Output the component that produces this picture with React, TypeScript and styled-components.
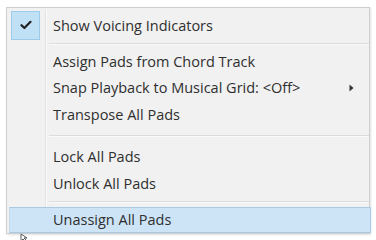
import styled, { createGlobalStyle } from 'styled-components';

const GlobalStyle = createGlobalStyle`
  html, body {
    margin: 0;
    padding: 0;
    background: #ffffff;
  }
  body {
    width: 376px;
    height: 240px;
    overflow: hidden;
  }
`;

type Entry =
  | { kind: 'item'; label: string; checked?: boolean; submenu?: boolean; hot?: boolean }
  | { kind: 'sep'; gap: number };

const entries: Entry[] = [
  { kind: 'item', label: 'Show Voicing Indicators', checked: true },
  { kind: 'sep', gap: 8 },
  { kind: 'item', label: 'Assign Pads from Chord Track' },
  { kind: 'item', label: 'Snap Playback to Musical Grid: <Off>', submenu: true },
  { kind: 'item', label: 'Transpose All Pads' },
  { kind: 'sep', gap: 16 },
  { kind: 'item', label: 'Lock All Pads' },
  { kind: 'item', label: 'Unlock All Pads' },
  { kind: 'sep', gap: 10 },
  { kind: 'item', label: 'Unassign All Pads', hot: true },
];

export default function App() {
  return (
    <>
      <GlobalStyle />
      <Page>
        <Menu>
          <Gutter />
          {entries.map((e, i) =>
            e.kind === 'sep' ? (
              <Separator key={i} $gap={e.gap} />
            ) : (
              <Item key={i} $hot={e.hot} $tall={e.checked}>
                <CheckCell>
                  {e.checked && (
                    <CheckBox>
                      <svg width="12" height="10" viewBox="0 0 12 10">
                        <path
                          d="M1.5 5.2 L4.4 8 L10.5 1.8"
                          fill="none"
                          stroke="#222"
                          strokeWidth="2.2"
                          strokeLinecap="round"
                          strokeLinejoin="round"
                        />
                      </svg>
                    </CheckBox>
                  )}
                </CheckCell>
                <Label>{e.label}</Label>
                {e.submenu && (
                  <Arrow>
                    <svg width="5" height="8" viewBox="0 0 5 8">
                      <path d="M0.5 0.5 L4.5 4 L0.5 7.5 Z" fill="#333" />
                    </svg>
                  </Arrow>
                )}
              </Item>
            )
          )}
        </Menu>
        <Cursor>
          <svg width="10" height="8" viewBox="0 0 10 8">
            <path d="M1 1 L1 8 L3 6 L5 8 L6 7 L4 5 L7 5 Z" fill="#fff" stroke="#333" strokeWidth="0.8" />
          </svg>
        </Cursor>
      </Page>
    </>
  );
}

const Page = styled.div`
  position: relative;
  padding: 7px 0 0 6px;
  height: 240px;
  box-sizing: border-box;
`;

const Menu = styled.div`
  position: relative;
  width: 364px;
  height: 227px;
  box-sizing: border-box;
  background: #f1f1f1;
  border: 1px solid #cfcfcf;
  box-shadow: 1px 1px 2px rgba(0, 0, 0, 0.12);
  padding: 2px 0 0 3px;
  display: flex;
  flex-direction: column;
  font-family: 'Open Sans', 'Noto Sans', sans-serif;
  font-size: 14.5px;
  color: #2f2f2f;
`;

const Gutter = styled.div`
  position: absolute;
  left: 38px;
  top: 2px;
  bottom: 2px;
  width: 1px;
  background: #e2e2e2;
  border-right: 1px solid #fbfbfb;
`;

const Item = styled.div<{ $hot?: boolean; $tall?: boolean }>`
  position: relative;
  display: flex;
  align-items: center;
  flex-shrink: 0;
  height: ${p => (p.$tall ? 30 : 26.5)}px;
  margin-right: -2px;
  margin-left: -1px;
  box-sizing: border-box;
  background: ${p => (p.$hot ? '#cde4f7' : 'transparent')};
  border: 1px solid ${p => (p.$hot ? '#a9c9e6' : 'transparent')};
  ${p => (p.$hot ? 'border-left-color: #c3d9ee;' : '')}
`;

const CheckCell = styled.div`
  width: 31px;
  height: 100%;
  display: flex;
  align-items: center;
  justify-content: center;
  flex-shrink: 0;
`;

const CheckBox = styled.div`
  width: 29px;
  height: 29px;
  box-sizing: border-box;
  background: #bfe0f5;
  border: 1px solid #9ccbec;
  display: flex;
  align-items: center;
  justify-content: center;
`;

const Label = styled.span`
  flex: 1;
  padding-left: 12px;
  white-space: nowrap;
`;

const Arrow = styled.span`
  display: flex;
  align-items: center;
  padding-right: 16px;
`;

const Separator = styled.div<{ $gap: number }>`
  height: ${p => p.$gap}px;
  flex-shrink: 0;
  display: flex;
  align-items: center;
  padding-left: 39px;
  &::after {
    content: '';
    flex: 1;
    height: 1px;
    background: #dcdcdc;
    border-bottom: 1px solid #fafafa;
  }
`;

const Cursor = styled.div`
  position: absolute;
  left: 20px;
  top: 233px;
  line-height: 0;
`;
